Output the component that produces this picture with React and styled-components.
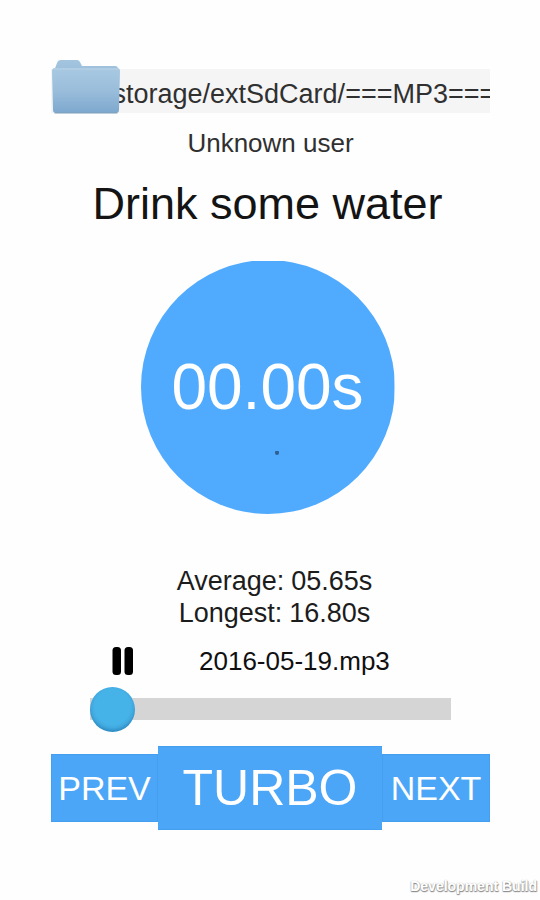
import React, { useState } from "react";
import styled, { createGlobalStyle } from "styled-components";

const GlobalStyle = createGlobalStyle`
  * { box-sizing: border-box; }
  body {
    margin: 0;
    background: #fefefe;
    color: #1c1c1c;
    font-family: "Liberation Sans", Arial, sans-serif;
    font-size: 27px;
    line-height: 32px;
  }
  button, input { font: inherit; color: inherit; margin: 0; }
  button { border: 0; padding: 0; background: none; cursor: pointer; }
`;

const Screen = styled.main`
  display: flex;
  flex-direction: column;
  min-height: 100vh;
  padding: 69px 50px 6px 51px;
`;

const PathBar = styled.div`
  position: relative;
  height: 44px;
  background: #f5f5f5;
`;

const PathInput = styled.input`
  display: block;
  width: 100%;
  height: 100%;
  padding: 7px 0 0 54px;
  border: 0;
  outline: 0;
  background: transparent;
  color: #303030;
`;

const FolderButton = styled.button`
  position: absolute;
  left: 0;
  top: -10px;
  width: 70px;
  height: 56px;

  svg { display: block; }
`;

const UserName = styled.p`
  margin: 14px 0 0;
  color: #303030;
  font-size: 26px;
  text-align: center;
`;

const Challenge = styled.section`
  display: flex;
  flex-direction: column;
  align-items: center;
  padding-right: 6px;
`;

const Title = styled.h1`
  margin: 19px 0 31px;
  font-size: 45px;
  font-weight: 400;
  line-height: 52px;
  text-align: center;
  color: #141414;
`;

const TimerButton = styled.button`
  position: relative;
  width: 254px;
  height: 254px;
  margin-top: -1px;
  border-radius: 50%;
  clip-path: inset(1px 0 0 0);
  background: #50abff;
  color: #fff;
  font-size: 64px;
  line-height: 76px;
`;

const TimerMark = styled.span`
  position: absolute;
  left: 53%;
  top: 75%;
  width: 4px;
  height: 4px;
  border-radius: 1px 1px 2px 2px;
  background: #2b6291;
`;

const Stats = styled.dl`
  margin: 51px 0 0;
  padding-left: 8px;
`;

const Stat = styled.div`
  display: flex;
  justify-content: center;
  gap: 7px;

  dt, dd { margin: 0; }
`;

const Player = styled.section`
  padding: 0 39px;
  margin-top: 16px;
`;

const TrackRow = styled.div`
  display: flex;
  align-items: center;
  gap: 65px;
  padding-left: 22px;
  color: #101010;
  font-size: 26px;
`;

const PauseButton = styled.button`
  width: 22px;
  height: 28px;

  svg { display: block; }
`;

const Seek = styled.input`
  display: block;
  width: 100%;
  height: 46px;
  margin-top: 9px;
  appearance: none;
  background: transparent;

  &::-webkit-slider-runnable-track {
    height: 22px;
    background: #d5d5d5;
  }
  &::-webkit-slider-thumb {
    appearance: none;
    width: 45px;
    height: 45px;
    margin-top: -11px;
    border-radius: 50%;
    background: radial-gradient(circle at 50% 44%, #46b3e8 0 52%, #40a9df 62%, #308fc6 72%);
  }
`;

const Controls = styled.nav`
  display: grid;
  grid-template-columns: 107fr 224fr 108fr;
  align-items: center;
  margin-top: 14px;
`;

const ControlButton = styled.button`
  height: ${({ $large }) => ($large ? 84 : 68)}px;
  border: 1px solid #449ff0;
  border-width: ${({ $large }) => ($large ? "1px 0" : "1px")};
  background: #4ca6f7;
  color: #fff;
  font-size: ${({ $large }) => ($large ? 50 : 34)}px;
  line-height: 1;
`;

const BuildLabel = styled.footer`
  margin: auto -47px 0 0;
  align-self: flex-end;
  color: #fff;
  font-size: 14px;
  font-weight: 700;
  line-height: 16px;
  text-shadow: 0 0 1px #aaa, 0 1px 1px #888, 1px 1px 1px #aaa;
`;

function FolderIcon() {
  return (
    <svg width="70" height="56" viewBox="0 0 70 56" aria-hidden="true">
      <defs>
        <linearGradient id="folderBack" x1="0" y1="0" x2="0" y2="1">
          <stop offset="0" stopColor="#a4c5df" />
          <stop offset="1" stopColor="#83abca" />
        </linearGradient>
        <linearGradient id="folderFront" x1="0" y1="0" x2="0" y2="1">
          <stop offset="0" stopColor="#a9c9e2" />
          <stop offset="0.5" stopColor="#9abddb" />
          <stop offset="1" stopColor="#7da8ce" />
        </linearGradient>
      </defs>
      <path d="M3 12 6 4Q7 1 10 1H26Q28 1 29 3L31 7H64Q67 7 67 10V51H3Z" fill="url(#folderBack)" />
      <path d="M1 12Q1 9 4 9H66Q69 9 69 12L68 51Q68 54 65 54H5Q2 54 2 51Z" fill="url(#folderFront)" />
      <path d="M3 10H67" stroke="#b5d1e7" />
      <path d="M4 54H66" stroke="#7f9fb8" strokeLinecap="round" />
    </svg>
  );
}

function PauseIcon() {
  return (
    <svg width="22" height="28" viewBox="0 0 22 28" aria-hidden="true">
      <rect x="0.5" y="0" width="8.5" height="28" rx="3.5" />
      <rect x="12.5" y="0" width="8.5" height="28" rx="3.5" />
    </svg>
  );
}

export default function App() {
  const [path, setPath] = useState("/storage/extSdCard/===MP3===");
  const [position, setPosition] = useState(0);

  return (
    <>
      <GlobalStyle />
      <Screen>
        <PathBar>
          <PathInput
            aria-label="Music folder"
            value={path}
            onChange={(e) => setPath(e.target.value)}
          />
          <FolderButton type="button" aria-label="Choose folder">
            <FolderIcon />
          </FolderButton>
        </PathBar>
        <UserName>Unknown user</UserName>
        <Challenge>
          <Title>Drink some water</Title>
          <TimerButton type="button">
            00.00s
            <TimerMark />
          </TimerButton>
        </Challenge>
        <Stats>
          <Stat>
            <dt>Average:</dt>
            <dd>05.65s</dd>
          </Stat>
          <Stat>
            <dt>Longest:</dt>
            <dd>16.80s</dd>
          </Stat>
        </Stats>
        <Player>
          <TrackRow>
            <PauseButton type="button" aria-label="Pause">
              <PauseIcon />
            </PauseButton>
            <span>2016-05-19.mp3</span>
          </TrackRow>
          <Seek
            type="range"
            min="0"
            max="100"
            aria-label="Playback position"
            value={position}
            onChange={(e) => setPosition(Number(e.target.value))}
          />
        </Player>
        <Controls aria-label="Track controls">
          <ControlButton type="button">PREV</ControlButton>
          <ControlButton type="button" $large>TURBO</ControlButton>
          <ControlButton type="button">NEXT</ControlButton>
        </Controls>
        <BuildLabel>Development Build</BuildLabel>
      </Screen>
    </>
  );
}
